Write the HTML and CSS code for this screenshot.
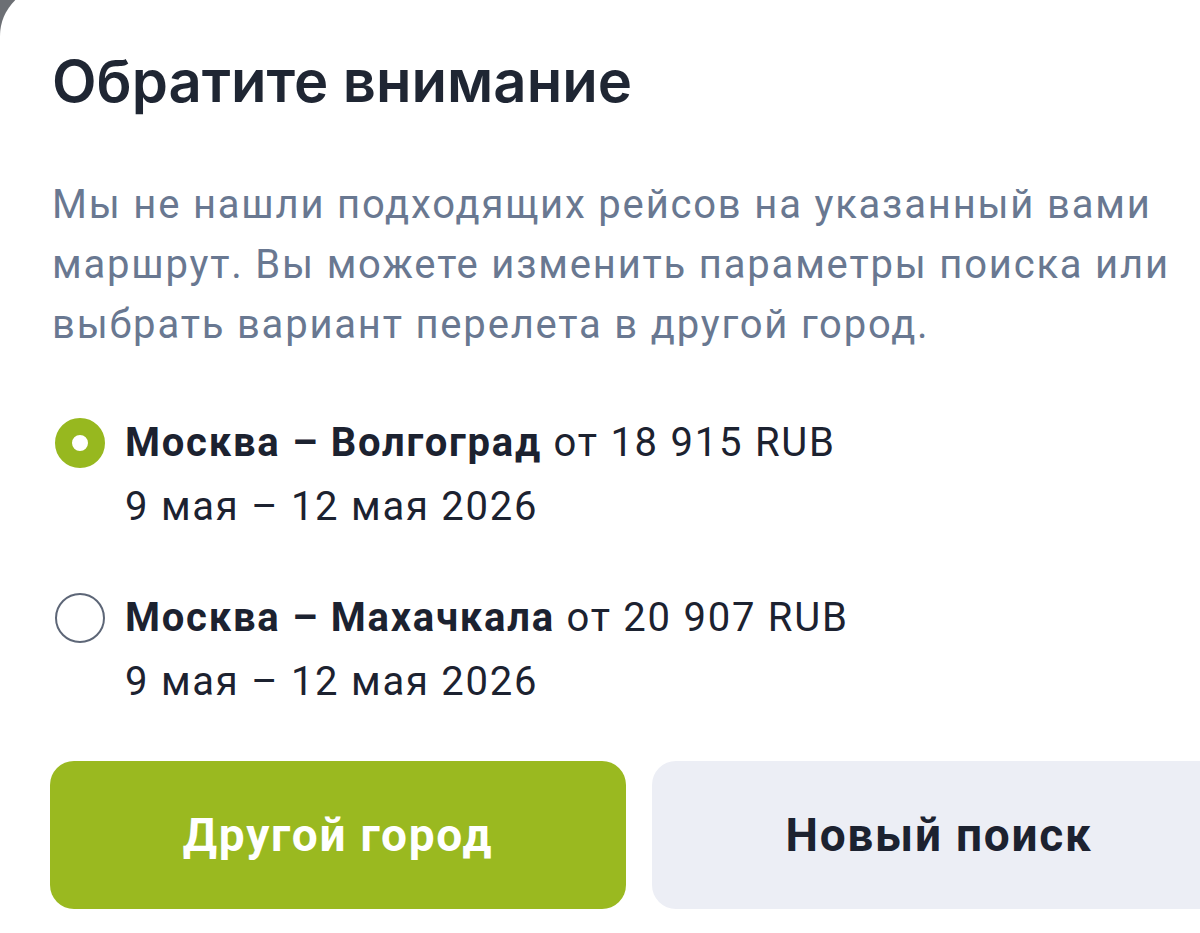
FILE: index.html
```html
<!DOCTYPE html>
<html lang="ru">
<head>
<meta charset="utf-8">
<link rel="stylesheet" href="styles.css">
</head>
<body>
<div class="card">
  <h1 class="title">Обратите внимание</h1>
  <p class="text">Мы не нашли подходящих рейсов на указанный вами маршрут. Вы можете изменить параметры поиска или выбрать вариант перелета в другой город.</p>
  <div class="options">
    <div class="option">
      <span class="radio radio-on"></span>
      <div class="option-body">
        <div class="route"><b>Москва – Волгоград</b> от 18 915 RUB</div>
        <div class="dates">9 мая – 12 мая 2026</div>
      </div>
    </div>
    <div class="option">
      <span class="radio"></span>
      <div class="option-body">
        <div class="route"><b>Москва – Махачкала</b> от 20 907 RUB</div>
        <div class="dates">9 мая – 12 мая 2026</div>
      </div>
    </div>
  </div>
  <div class="actions">
    <button class="btn btn-primary">Другой город</button>
    <button class="btn btn-secondary">Новый поиск</button>
  </div>
</div>
</body>
</html>
```
FILE: styles.css
```css
html, body {
  margin: 0;
  padding: 0;
  background: #6c6f74;
  overflow: hidden;
}
body {
  width: 1200px;
  height: 933px;
}
.card {
  margin-top: -14px;
  background: #ffffff;
  border-top-left-radius: 50px;
  height: 947px;
  padding: 14px 0 0 52px;
  box-sizing: border-box;
  font-family: Roboto, "Noto Sans", sans-serif;
  color: #1c2230;
}
.title {
  margin: 45px 0 0;
  font-family: Inter, "Noto Sans", sans-serif;
  font-weight: 600;
  font-size: 58px;
  line-height: 72px;
  color: #1f2633;
}
.text {
  margin: 58px 0 0;
  font-size: 40px;
  line-height: 60px;
  letter-spacing: 1.8px;
  color: #697891;
  width: 1148px;
}
.options {
  margin-top: 56px;
  display: flex;
  flex-direction: column;
  gap: 47px;
}
.option {
  display: flex;
  align-items: flex-start;
  gap: 20px;
}
.radio {
  width: 50px;
  height: 50px;
  box-sizing: border-box;
  border-radius: 50%;
  border: 2px solid #5d6677;
  margin: 7px 0 0 3px;
  flex: none;
}
.radio-on {
  border: 17px solid #97b81f;
  background: #fff;
}
.route, .dates {
  font-size: 40px;
  line-height: 64px;
  letter-spacing: 1.75px;
  color: #1c2230;
}
.route b {
  font-weight: 700;
}
.actions {
  margin-top: 47px;
  display: flex;
  gap: 26px;
}
.btn {
  flex: none;
  height: 148px;
  border: 0;
  border-radius: 24px;
  font-family: Roboto, sans-serif;
  font-weight: 700;
  font-size: 46px;
  letter-spacing: 1.75px;
}
.btn-primary {
  width: 576px;
  background: #9ab920;
  color: #ffffff;
  margin-left: -2px;
}
.btn-secondary {
  width: 574px;
  background: #eceef5;
  color: #1c2230;
}
```
